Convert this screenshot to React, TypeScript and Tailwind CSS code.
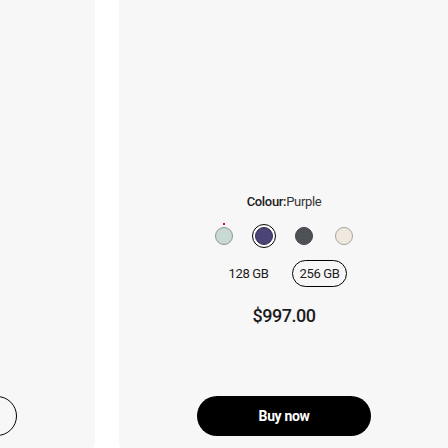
const swatches = [
  { name: 'Mint', color: 'bg-[#c9d9d4]', border: 'border-[#8c9592]' },
  { name: 'Purple', color: 'bg-[#4b4577]', border: 'border-[#2f2b4f]' },
  { name: 'Graphite', color: 'bg-[#4e5156]', border: 'border-[#3e4044]' },
  { name: 'Cream', color: 'bg-[#efe9e0]', border: 'border-[#a9a49d]' },
];

// the previous slide in the carousel only shows the edge of its button
function ProductCard({ peek }: { peek?: boolean }) {
  const hidden = peek ? 'invisible' : '';
  return (
    <div className="flex w-[330px] shrink-0 flex-col items-center rounded-[20px] bg-[#f7f7f7] pt-[234px] pb-6 text-[#1c1c1c]">
      <p className={`text-[13px] leading-4 tracking-tight ${hidden}`}>
        <span className="font-medium">Colour:</span>
        <span className="text-[#333]">Purple</span>
      </p>

      <div className={`mt-[14px] flex gap-4 ${hidden}`}>
        {swatches.map((s, i) => (
          <div key={s.name} className="relative flex h-6 w-6 items-center justify-center">
            {i === 1 ? (
              <div className="flex h-6 w-6 items-center justify-center rounded-full border border-black bg-white">
                <div className={`h-[18px] w-[18px] rounded-full border ${s.border} ${s.color}`} />
              </div>
            ) : (
              <div className={`h-[18px] w-[18px] rounded-full border ${s.border} ${s.color}`} />
            )}
            {i === 0 && <span className="absolute left-[11px] top-[-1px] h-[2px] w-[2px] bg-[#ff0000]" />}
          </div>
        ))}
      </div>

      <div className={`mt-3 flex gap-4 text-[13px] tracking-tight ${hidden}`}>
        <button className="flex h-[27px] w-[55px] items-center justify-center rounded-full border border-transparent">128 GB</button>
        <button className="flex h-[27px] w-[55px] items-center justify-center rounded-full border border-black">256 GB</button>
      </div>

      <p className={`mt-[17px] text-[18px] font-medium leading-6 tracking-tight ${hidden}`}>$997.00</p>

      {peek ? (
        <div className="mt-[68px] h-10 w-[174px] rounded-full border border-black" />
      ) : (
        <button className="mt-[68px] flex h-10 w-[174px] items-center justify-center rounded-full bg-black text-[14px] font-bold tracking-tight text-white">
          Buy now
        </button>
      )}
    </div>
  );
}

export default function App() {
  return (
    <div className="h-[448px] overflow-hidden bg-white" style={{ fontFamily: 'Roboto, "Noto Sans", sans-serif' }}>
      <div className="-mt-10 ml-[-235px] flex gap-6">
        <ProductCard peek />
        <ProductCard />
      </div>
    </div>
  );
}
